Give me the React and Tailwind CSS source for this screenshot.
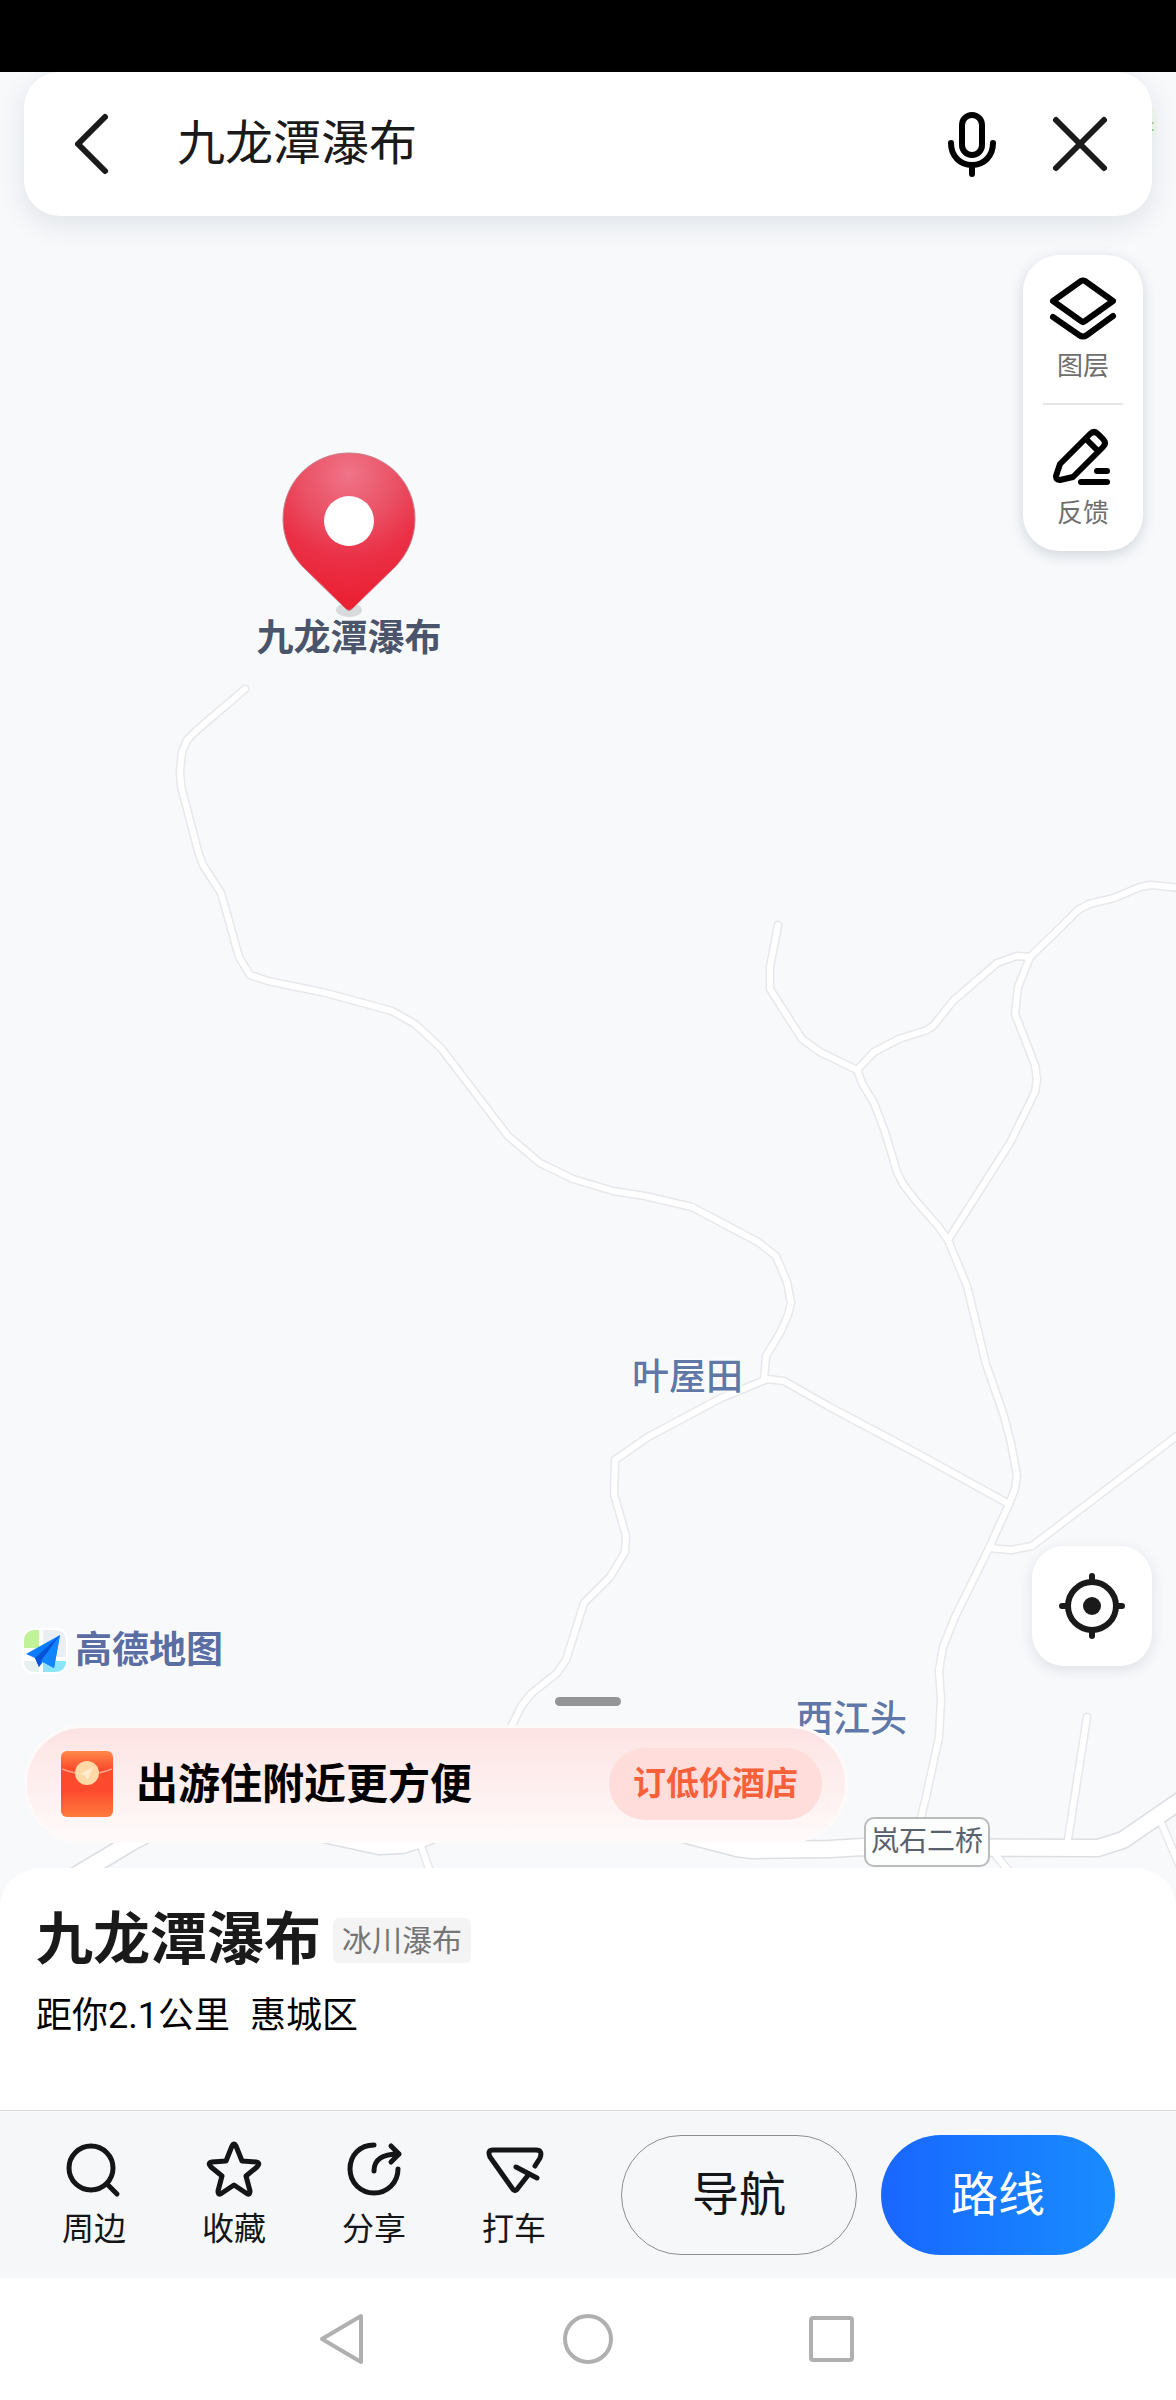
import React from "react";

const minorRoads = [
  "M245 689 L196 731 L187 740 L182 752 L180 771 L181 786 L198 851 L203 865 L221 893 L227 914 L239 957 L250 975 L268 981 L326 993 L392 1011 L415 1024 L441 1048 L508 1136 L540 1163 L573 1179 L613 1191 L645 1196 L692 1207 L758 1242 L776 1256 L787 1282 L791 1303 L788 1315 L780 1333 L766 1356 L764 1380",
  "M1009 1504 L920 1455 L828 1406 L784 1381 L767 1379 L748 1387 L721 1398 L648 1437 L615 1460 L614 1494 L626 1536 L625 1552 L610 1577 L584 1603 L566 1660 L557 1673 L532 1693 L522 1705 L511 1727 L490 1780",
  "M778 925 L770 967 L770 989 L802 1039 L820 1052 L857 1070 L863 1085 L874 1103 L885 1132 L897 1172 L903 1184 L916 1201 L938 1226 L948 1240 L967 1286 L986 1364 L1004 1416 L1011 1443 L1017 1476 L1015 1489 L1009 1504 L989 1548 L955 1617 L943 1647 L939 1670 L941 1700 L939 1737 L926 1797 L914 1846",
  "M857 1070 L874 1052 L899 1039 L927 1030 L934 1025 L953 1001 L997 963 L1017 956 L1030 957 L1059 929 L1078 910 L1089 904 L1114 898 L1140 887 L1151 885 L1190 889",
  "M1030 957 L1018 987 L1015 1014 L1035 1065 L1037 1079 L1035 1092 L1010 1143 L948 1240",
  "M989 1548 L1011 1550 L1032 1546 L1190 1426",
  "M1087 1717 L1067 1846",
  "M419 1840 L440 1900",
  "M988 1846 L1030 1896",
  "M1160 1820 L1190 1890",
];

const mainRoad =
  "M30 1903 L90 1867 L130 1843 L200 1805 L333 1836 L379 1846 L402 1845 L421 1839 L520 1800 L640 1820 L687 1835 L737 1848 L752 1850 L830 1849 L863 1847 L1098 1848 L1123 1840 L1190 1794";

const MapRoads = () => (
  <svg
    className="absolute inset-0 h-full w-full"
    viewBox="0 72 1176 1836"
    preserveAspectRatio="xMidYMin slice"
    fill="none"
    strokeLinecap="round"
    strokeLinejoin="round"
    aria-hidden="true"
  >
    <g stroke="#e6e8eb" strokeWidth="9">
      {minorRoads.map((d) => <path key={d} d={d} />)}
    </g>
    <path d={mainRoad} stroke="#dcdfe3" strokeWidth="19" />
    <g stroke="#ffffff" strokeWidth="6">
      {minorRoads.map((d) => <path key={d} d={d} />)}
    </g>
    <path d={mainRoad} stroke="#ffffff" strokeWidth="16" />
    {/* park symbol, mostly under the search bar */}
    <ellipse cx="1146" cy="123" rx="12" ry="18" fill="#f4faf0" />
    <path d="M1148 123 H1153 M1148 130 H1153" stroke="#a6cf98" strokeWidth="2" />
  </svg>
);

const PinIcon = () => (
  <svg width="134" height="166" viewBox="0 0 134 166" aria-hidden="true">
    <defs>
      <radialGradient id="pin" gradientUnits="userSpaceOnUse" cx="67" cy="22" r="140">
        <stop offset="0" stopColor="#f07488" />
        <stop offset="0.35" stopColor="#ea5064" />
        <stop offset="0.6" stopColor="#ea3046" />
        <stop offset="1" stopColor="#ec1c2e" />
      </radialGradient>
    </defs>
    <ellipse cx="67" cy="158" rx="13" ry="7" fill="#d9dadc" />
    <path d="M67 1 C30 1 1 30 1 67 C1 85 8 101 20 114 L64 157 Q67 160 70 157 L114 114 C126 101 133 85 133 67 C133 30 104 1 67 1 Z" fill="url(#pin)" stroke="#c8808c" strokeWidth="1" />
    <circle cx="67" cy="69" r="25" fill="#fff" />
  </svg>
);

const LogoIcon = () => (
  <svg width="46" height="46" viewBox="0 0 46 46" aria-hidden="true">
    <rect width="46" height="46" rx="12" fill="#fff" />
    <path d="M13 2 H17 V20 H2 V13 C2 6 6 2 13 2 Z" fill="#c0f29a" />
    <path d="M21 2 H33 C40 2 44 6 44 13 V29 H21 Z" fill="#e9eff2" />
    <path d="M2 33 H17 V44 H13 C6 44 2 40 2 33 Z" fill="#e6f0ee" />
    <path d="M21 33 H44 C44 40 40 44 33 44 H21 Z" fill="#8ce6fb" />
    <path d="M38 7 L4 26 L13 30 L17 39 L21 34 L32 40 Z" fill="#0d7dff" />
    <path d="M38 7 L13 30 L17 39 L20 33 Z" fill="#0453d8" />
    <path d="M38 7 L19 33 L32 40 Z" fill="#1285ff" />
  </svg>
);

const EnvelopeIcon = () => (
  <svg width="52" height="66" viewBox="0 0 52 66" aria-hidden="true">
    <defs>
      <linearGradient id="packet" x1="0" y1="0" x2="0" y2="1">
        <stop offset="0" stopColor="#ff8a4a" />
        <stop offset="0.28" stopColor="#fb4a2c" />
        <stop offset="0.6" stopColor="#fd4a2e" />
        <stop offset="1" stopColor="#ff7a3c" />
      </linearGradient>
    </defs>
    <rect width="52" height="66" rx="6" fill="url(#packet)" />
    <path d="M1 18 Q26 28 51 18" fill="none" stroke="#ffa184" strokeWidth="1.5" />
    <circle cx="26" cy="22" r="12" fill="#ffd9a6" />
    <path d="M32 16 L19 23 L24 25 L27 29 Z" fill="#ffeacb" />
  </svg>
);

const LayersIcon = () => (
  <svg width="70" height="64" viewBox="0 0 70 64" fill="none" stroke="#000" strokeWidth="6" strokeLinecap="round" strokeLinejoin="round" aria-hidden="true">
    <path d="M33 4 Q35 3 37 4 L65 24 L37 44 Q35 46 33 44 L5 24 Z" />
    <path d="M5 40 L31 58 Q35 61 39 58 L65 39" />
  </svg>
);

const EditIcon = () => (
  <svg width="60" height="58" viewBox="0 0 60 58" fill="none" stroke="#000" strokeWidth="6" strokeLinecap="round" strokeLinejoin="round" aria-hidden="true">
    <path d="M37 6 Q41 2 45 6 L50 11 Q54 15 50 19 L20 49 L7 52 Q3 52 3 48 L7 36 Z" />
    <path d="M33 11 L44 22" />
    <path d="M44 43 H54 M28 54 H54" />
  </svg>
);

const iconProps = {
  width: 60,
  height: 60,
  viewBox: "0 0 60 60",
  fill: "none",
  stroke: "#141517",
  strokeWidth: 5,
  strokeLinecap: "round",
  strokeLinejoin: "round",
  "aria-hidden": true,
};

const shortcuts = [
  {
    label: "周边",
    icon: (
      <svg {...iconProps}>
        <ellipse cx="27" cy="29" rx="22" ry="22" />
        <path d="M43 45 L53 55" />
      </svg>
    ),
  },
  {
    label: "收藏",
    icon: (
      <svg {...iconProps}>
        <path d="M28 7 Q30 3 32 7 L38 22 L52 23 Q57 24 53 28 L42 37 L46 52 Q46 57 42 54 L30 46 L18 54 Q14 57 14 52 L18 37 L7 28 Q3 24 8 23 L22 22 Z" />
      </svg>
    ),
  },
  {
    label: "分享",
    icon: (
      <svg {...iconProps}>
        <path d="M30 6 C16 6 6 16 6 30 C6 44 17 54 30 54 C43 54 54 44 54 30" />
        <path d="M30 32 C30 21 37 15 55 15 M47 7 L55 15 L47 23" />
      </svg>
    ),
  },
  {
    label: "打车",
    icon: (
      <svg {...iconProps}>
        <path d="M51 27 L56 19 Q59 11 52 11 H9 Q3 11 6 18 L28 49 Q31 54 34 49 L45 35" />
        <path d="M32 28 L53 39" />
      </svg>
    ),
  },
];

const App = () => {
  return (
    <div className="flex min-h-screen flex-col bg-white font-['Roboto','Noto_Sans_CJK_SC',sans-serif] text-[#1a1a1a]">
      <div className="h-[72px] bg-black"></div>

      <main className="relative flex flex-1 flex-col bg-[#f7f9fb] pb-[65px]">
        <MapRoads />

        {/* map labels */}
        <div className="absolute left-[249px] top-[380px] flex w-[200px] flex-col items-center">
          <PinIcon />
          <span className="text-[37px] leading-[42px] font-bold whitespace-nowrap text-[#4a556c] [text-shadow:0_0_3px_#fff,0_0_3px_#fff]">九龙潭瀑布</span>
        </div>
        <span className="absolute left-[632px] top-[1285px] text-[37px] leading-[42px] font-medium text-[#6078a8] [text-shadow:0_0_3px_#fff,0_0_3px_#fff,0_0_4px_#fff]">叶屋田</span>
        <span className="absolute left-[796px] top-[1627px] text-[37px] leading-[42px] font-medium text-[#6078a8] [text-shadow:0_0_3px_#fff,0_0_3px_#fff,0_0_4px_#fff]">西江头</span>
        <span className="absolute left-[864px] top-[1745px] rounded-[10px] border-2 border-[#b9bbbd] bg-[#fcfdfd] px-[5px] text-[28px] leading-[46px] whitespace-nowrap text-[#58616e]">岚石二桥</span>

        <form className="relative mx-6 flex h-36 items-center rounded-[36px] bg-white pr-[40px] pl-[44px] shadow-[0_8px_28px_rgba(40,50,70,0.11)]">
          <button type="button" aria-label="返回" className="shrink-0">
            <svg width="46" height="64" viewBox="0 0 46 64" fill="none" stroke="#1a1a1a" strokeWidth="6" strokeLinecap="round" strokeLinejoin="round">
              <path d="M37 5 L10 32 L37 59" />
            </svg>
          </button>
          <input
            aria-label="搜索地点"
            defaultValue="九龙潭瀑布"
            className="ml-[63px] min-w-0 flex-1 bg-transparent text-[48px] leading-[64px] outline-none"
          />
          <button type="button" aria-label="语音搜索" className="shrink-0">
            <svg width="56" height="70" viewBox="0 0 56 70" fill="none" stroke="#000" strokeWidth="6" strokeLinecap="round">
              <rect x="18" y="6" width="20" height="40" rx="10" />
              <path d="M7 34 C7 47 16 56 28 56 C40 56 49 47 49 34 M28 57 V65" />
            </svg>
          </button>
          <button type="button" aria-label="清除" className="ml-[48px] shrink-0">
            <svg width="64" height="64" viewBox="0 0 64 64" fill="none" stroke="#1a1a1a" strokeWidth="6" strokeLinecap="round">
              <path d="M8 8 L56 56 M56 8 L8 56" />
            </svg>
          </button>
        </form>

        <div className="relative mt-[39px] mr-[33px] flex w-[120px] flex-col items-center self-end rounded-[36px] bg-white shadow-[0_4px_14px_rgba(40,50,70,0.18)]">
          <button className="flex h-[148px] flex-col items-center pt-[22px] text-[26px] leading-[36px] text-[#6e6e6e]">
            <LayersIcon />
            <span className="mt-[7px]">图层</span>
          </button>
          <div className="h-[2px] w-20 bg-[#e4e5e7]"></div>
          <button className="flex h-[146px] flex-col items-center pt-[23px] text-[26px] leading-[36px] text-[#6e6e6e]">
            <EditIcon />
            <span className="mt-[9px]">反馈</span>
          </button>
        </div>

        <div className="relative mr-6 ml-[22px] mt-auto flex items-end justify-between">
          <div className="flex items-center gap-[7px]">
            <LogoIcon />
            <span className="text-[37px] leading-[38px] font-bold text-[#5a6ea3] [text-shadow:0_0_3px_#fff,0_0_3px_#fff]">高德地图</span>
          </div>
          <button aria-label="定位" className="mb-2 grid h-[120px] w-[120px] place-items-center rounded-[32px] bg-white shadow-[0_4px_14px_rgba(40,50,70,0.12)]">
            <svg width="68" height="68" viewBox="0 0 68 68" fill="none" stroke="#1a1a1a" strokeWidth="6" strokeLinecap="round">
              <circle cx="34" cy="34" r="24" />
              <path d="M34 4 V9 M34 59 V64 M4 34 H9 M59 34 H64" />
              <circle cx="34" cy="34" r="9" fill="#1a1a1a" stroke="none" />
            </svg>
          </button>
        </div>

        <div className="relative mt-[23px] h-[9px] w-[66px] self-center rounded-full bg-[#929496]"></div>

        <div className="relative mt-[19px] ml-6 flex h-[118px] w-[824px] max-w-full items-center rounded-full border-[3px] border-[#fffafa] bg-linear-to-b from-[#fde3e3] to-[#fffafa] pr-[23px] pl-[34px]">
          <EnvelopeIcon />
          <span className="ml-[23px] flex-1 pt-0.5 text-[42px] leading-[56px] font-bold whitespace-nowrap text-black">出游住附近更方便</span>
          <button className="h-[72px] w-[213px] rounded-full bg-[#fedddb] text-[33px] font-bold text-[#f8603a]">订低价酒店</button>
        </div>
      </main>

      <section className="relative -mt-10 h-[242px] rounded-t-[40px] bg-white px-9">
        <div className="flex items-center gap-3 pt-[36px]">
          <h1 className="text-[57px] leading-[72px] font-bold">九龙潭瀑布</h1>
          <span className="rounded-[6px] bg-[#f4f4f4] px-[9px] text-[30px] leading-[45px] text-[#757575]">冰川瀑布</span>
        </div>
        <p className="mt-4 flex gap-5 text-[36px] leading-[48px] text-black">
          <span>距你2.1公里</span>
          <span>惠城区</span>
        </p>
      </section>

      <footer className="flex h-[168px] items-center border-t border-[#d9dbde] bg-[#f5f7f9] pr-[61px] pl-6">
        {shortcuts.map((item) => (
          <button key={item.label} className="flex w-[140px] flex-col items-center gap-2 text-[32px] leading-[44px] text-[#141517]">
            {item.icon}
            <span>{item.label}</span>
          </button>
        ))}
        <div className="ml-[37px] flex flex-1 gap-6">
          <button className="h-[120px] flex-1 rounded-full border border-[#8c8e91] pt-0.5 text-[47px] text-[#141517]">导航</button>
          <button className="h-[120px] flex-1 rounded-full bg-linear-to-r from-[#1a66ff] to-[#1a8cff] pt-0.5 text-[47px] text-white">路线</button>
        </div>
      </footer>

      <nav className="flex h-[122px] items-center justify-center gap-[195px] bg-white">
        <button aria-label="后退">
          <svg width="50" height="52" viewBox="0 0 50 52" fill="none" stroke="#b0b0b0" strokeWidth="4" strokeLinejoin="round">
            <path d="M43 3 V49 L4 26 Z" />
          </svg>
        </button>
        <button aria-label="主页">
          <svg width="50" height="52" viewBox="0 0 50 52" fill="none" stroke="#b0b0b0" strokeWidth="4">
            <circle cx="25" cy="26" r="23" />
          </svg>
        </button>
        <button aria-label="最近任务">
          <svg width="50" height="52" viewBox="0 0 50 52" fill="none" stroke="#b0b0b0" strokeWidth="4">
            <rect x="3" y="5" width="41" height="42" rx="2" />
          </svg>
        </button>
      </nav>
    </div>
  );
};

export default App;
